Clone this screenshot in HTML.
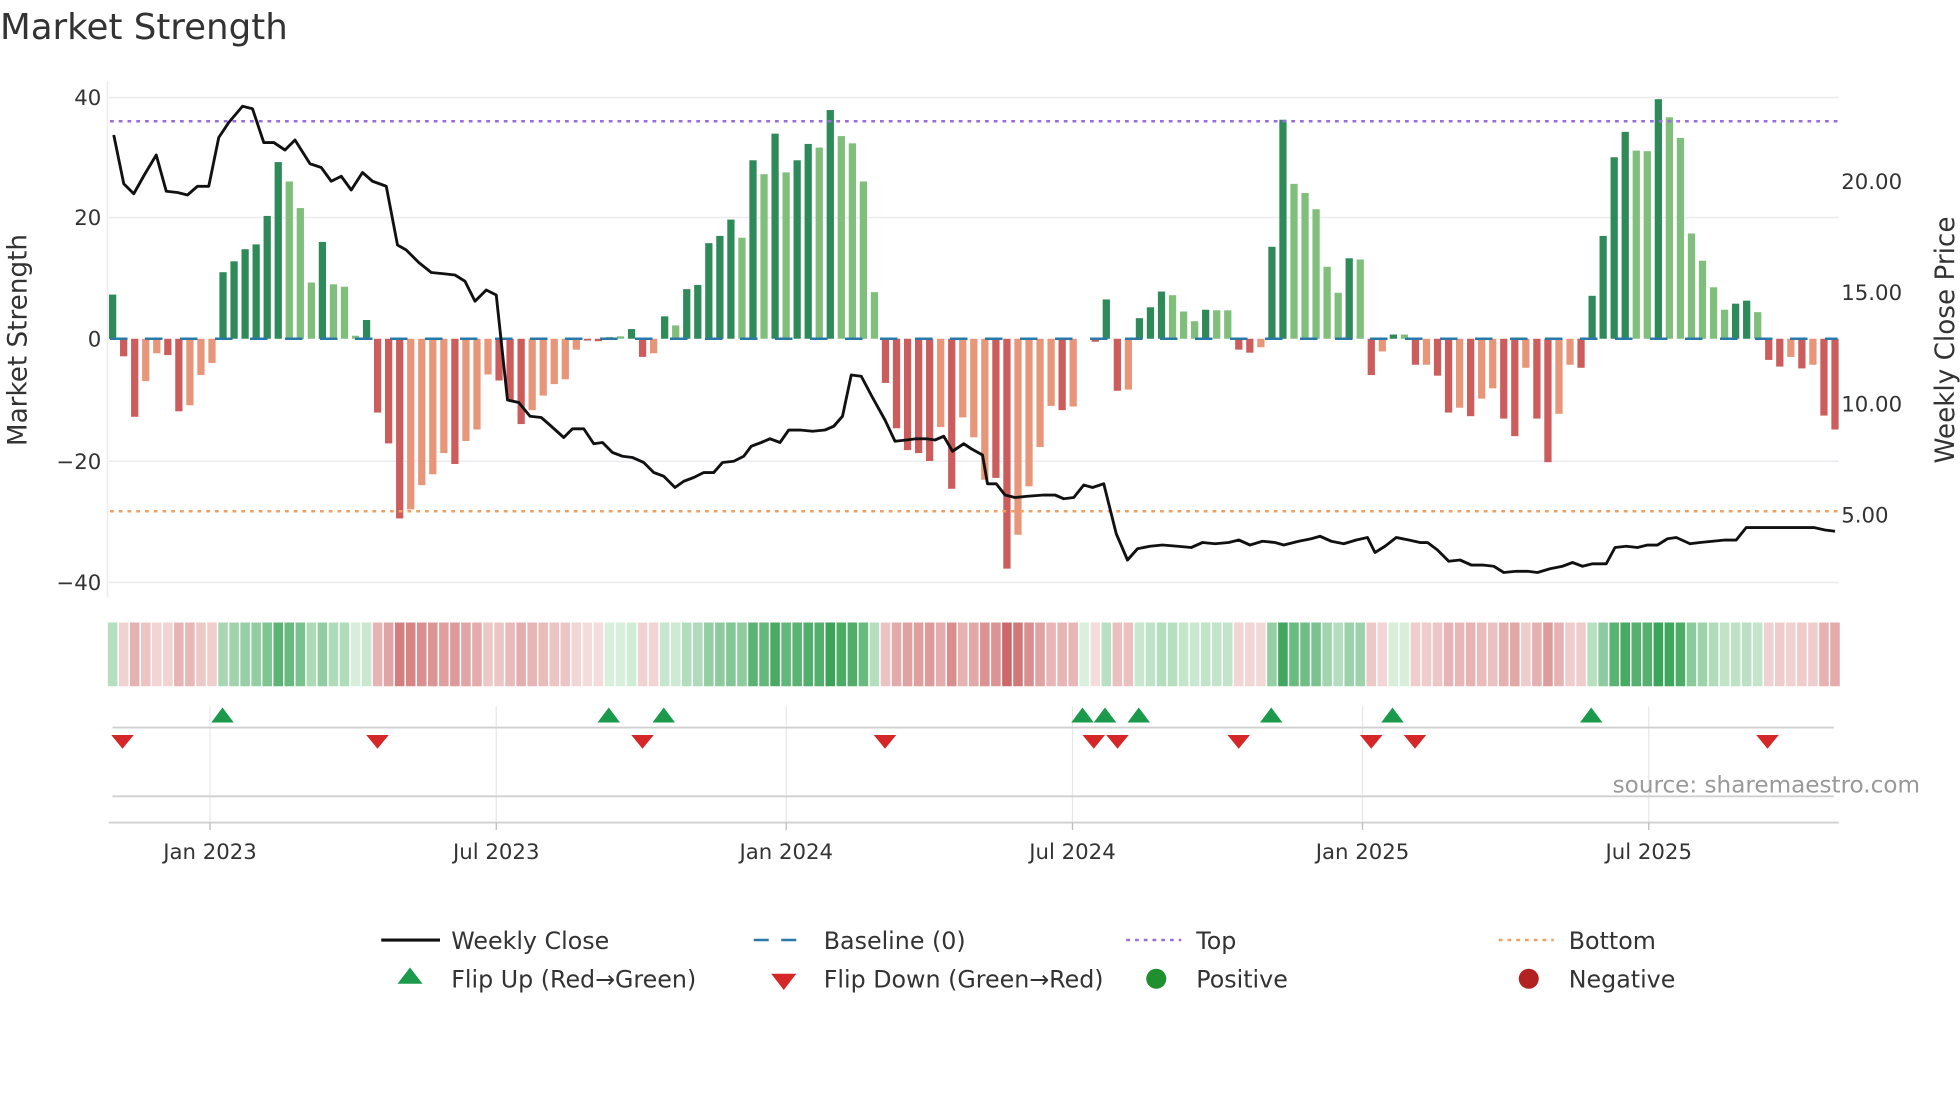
<!DOCTYPE html>
<html><head><meta charset="utf-8">
<style>
html,body{margin:0;padding:0;background:#fff;}
svg{display:block;}
text{font-family:"DejaVu Sans","Liberation Sans",sans-serif;fill:#333;}
</style></head>
<body>
<svg id="s" width="1960" height="1102" viewBox="0 0 1568 881.6" xmlns="http://www.w3.org/2000/svg">
<rect width="1568" height="881.6" fill="#fff"/>
<text x="0" y="31" font-size="28.5">Market Strength</text>
<g stroke="#ececf0" stroke-width="1.2">
<line x1="87" y1="78" x2="1471" y2="78"/>
<line x1="87" y1="174" x2="1471" y2="174"/>
<line x1="87" y1="369" x2="1471" y2="369"/>
<line x1="87" y1="466" x2="1471" y2="466"/>
</g>
<line x1="86" y1="65" x2="86" y2="478" stroke="#ececf0" stroke-width="1.2"/>
<g font-size="17" text-anchor="end">
<text x="81" y="84">40</text><text x="81" y="180">20</text><text x="81" y="277">0</text>
<text x="81" y="375">−20</text><text x="81" y="472">−40</text>
</g>
<g font-size="17">
<text x="1473" y="151">20.00</text><text x="1473" y="240">15.00</text>
<text x="1473" y="329">10.00</text><text x="1473" y="418">5.00</text>
</g>
<text transform="translate(21,272) rotate(-90)" font-size="21" text-anchor="middle">Market Strength</text>
<text transform="translate(1563,272) rotate(-90)" font-size="21" text-anchor="middle">Weekly Close Price</text>
<g id="bars"></g>
<line x1="88" y1="271" x2="1470" y2="271" stroke="#2a78a8" stroke-width="2" stroke-dasharray="14,14"/>
<line x1="88" y1="97" x2="1470" y2="97" stroke="#9b6ce0" stroke-width="2" stroke-dasharray="3,4"/>
<line x1="88" y1="409" x2="1470" y2="409" stroke="#f0a060" stroke-width="2" stroke-dasharray="3,4"/>
<polyline id="price" fill="none" stroke="#111" stroke-width="2.3" stroke-linejoin="round"/>
<g id="strip"></g>
<g stroke="#e8e8ec" stroke-width="1">
<line x1="168" y1="565" x2="168" y2="658"/><line x1="397" y1="565" x2="397" y2="658"/>
<line x1="629" y1="565" x2="629" y2="658"/><line x1="858" y1="565" x2="858" y2="658"/>
<line x1="1090" y1="565" x2="1090" y2="658"/><line x1="1319" y1="565" x2="1319" y2="658"/>
</g>
<line x1="90" y1="582" x2="1467" y2="582" stroke="#d0d0d0" stroke-width="1.5"/>
<line x1="90" y1="637" x2="1467" y2="637" stroke="#d0d0d0" stroke-width="1.5"/>
<line x1="87" y1="658" x2="1471" y2="658" stroke="#d0d0d0" stroke-width="1.5"/>
<g stroke="#bbb" stroke-width="1">
<line x1="168" y1="658" x2="168" y2="664"/><line x1="397" y1="658" x2="397" y2="664"/>
<line x1="629" y1="658" x2="629" y2="664"/><line x1="858" y1="658" x2="858" y2="664"/>
<line x1="1090" y1="658" x2="1090" y2="664"/><line x1="1319" y1="658" x2="1319" y2="664"/>
</g>
<g id="flips"></g>
<text x="1536" y="634" font-size="18.5" text-anchor="end" style="fill:#999">source: sharemaestro.com</text>
<g font-size="17" text-anchor="middle">
<text x="168" y="687">Jan 2023</text><text x="397" y="687">Jul 2023</text>
<text x="629" y="687">Jan 2024</text><text x="858" y="687">Jul 2024</text>
<text x="1090" y="687">Jan 2025</text><text x="1319" y="687">Jul 2025</text>
</g>
<g font-size="19">
<line x1="305" y1="752" x2="352" y2="752" stroke="#111" stroke-width="2.5"/>
<text x="361" y="759">Weekly Close</text>
<line x1="603" y1="752" x2="647" y2="752" stroke="#2a78a8" stroke-width="2" stroke-dasharray="12,10"/>
<text x="659" y="759">Baseline (0)</text>
<line x1="901" y1="752" x2="945" y2="752" stroke="#9b6ce0" stroke-width="2" stroke-dasharray="3,4"/>
<text x="957" y="759">Top</text>
<line x1="1199" y1="752" x2="1243" y2="752" stroke="#f0a060" stroke-width="2" stroke-dasharray="3,4"/>
<text x="1255" y="759">Bottom</text>
<polygon points="328,774 338,787 318,787" fill="#1a9a4a"/>
<text x="361" y="790">Flip Up (Red→Green)</text>
<polygon points="617,779 637,779 627,792" fill="#d62728"/>
<text x="659" y="790">Flip Down (Green→Red)</text>
<circle cx="925" cy="783" r="8" fill="#1f8f2f"/>
<text x="957" y="790">Positive</text>
<circle cx="1223" cy="783" r="8" fill="#b22222"/>
<text x="1255" y="790">Negative</text>
</g>
</svg>
<script>
var NS="http://www.w3.org/2000/svg";
function el(t,a,p){var e=document.createElementNS(NS,t);for(var k in a)e.setAttribute(k,a[k]);p.appendChild(e);return e;}
var d="7.3g,-2.9r,-12.9r,-7o,-2.4o,-2.7r,-12r,-11o,-6o,-4o,11g,12.8g,14.8g,15.6g,20.3g,29.2g,26l,21.6l,9.3l,16g,9l,8.6l,0.5l,3.1g,-12.2r,-17.3r,-29.7r,-28.2o,-24.2o,-22.4o,-18.9o,-20.7r,-16.9o,-15o,-5.9o,-6.9r,-10.2r,-14.1r,-11.8o,-9.4o,-7.5o,-6.7o,-1.8o,-0.3r,-0.4r,0.3l,0.4l,1.6g,-3r,-2.4o,3.7g,2.2l,8.2g,8.9g,15.8g,17g,19.7g,16.7l,29.5g,27.2l,33.9g,27.5l,29.5g,32.2g,31.6l,37.8g,33.5l,32.3l,26l,7.7l,-7.3r,-14.8r,-18.4r,-18.9r,-20.2r,-14.6o,-24.8r,-13o,-16.3o,-23.3o,-23r,-38r,-32.4o,-24.4o,-17.9o,-11.1o,-11.8r,-11.2o,0o,-0.5r,6.5g,-8.6r,-8.4o,3.4g,5.2g,7.8g,7.2l,4.5l,2.9l,4.8g,4.7l,4.7l,-1.8r,-2.3r,-1.4o,15.2g,36.2g,25.6l,24.1l,21.4l,11.9l,7.6l,13.3g,13.1l,-6r,-2.1o,0.7g,0.7l,-4.3r,-4.3o,-6.1r,-12.2r,-11.4o,-12.8r,-9.9o,-8.2o,-13.2r,-16.1r,-4.8o,-13.2r,-20.4r,-12.4o,-4.3o,-4.8r,7.1g,17g,30g,34.2g,31.1l,31l,39.6g,36.6l,33.2l,17.4l,12.9l,8.5l,4.8l,5.8g,6.3g,4.4l,-3.5r,-4.6r,-3o,-4.9r,-4.3o,-12.7r,-15r".split(",");
var col={g:"#2e8a58",l:"#7fbf7b",r:"#cd5c5c",o:"#e8967a"};
var bars=document.getElementById("bars"),strip=document.getElementById("strip");
var n=d.length,step=(1468-90.1)/(n-1);
function mix(a,b,t){return "rgb("+a.map(function(v,i){return Math.round(v+(b[i]-v)*t)}).join(",")+")";}
for(var i=0;i<n;i++){
 var v=parseFloat(d[i]),c=d[i].slice(-1),x=90.1+i*step;
 var y0=271,y1=271-v*4.84;
 if(Math.abs(v)>0.05) el("rect",{x:x-2.9,y:Math.min(y0,y1),width:5.8,height:Math.abs(y1-y0),fill:col[c]},bars);
 var t=Math.min(1,Math.abs(v)/38);
 var f=v>=0?mix([218,240,222],[58,164,88],Math.pow(t,0.9)):mix([245,222,222],[204,104,104],Math.pow(t,0.9));
 el("rect",{x:x-step/2+0.6,y:498,width:step-1.2,height:51,fill:f},strip);
}
var p="91,108 99,147 107,155 116,139 125,124 133,153 142,154 150,156 158,149 167,149 175,110 183,98 194,85 202,87 211,114 219,114 228,120 236,112 248,131 257,134 265,145 273,141 281,152 290,138 298,145 309,149 318,196 325,200 335,210 345,218 355,219 364,220 372,225 380,241 389,232 397,236 406,320 415,322 424,333 433,334 441,341 451,350 458,343 467,343 475,355 482,354 490,362 498,365 506,366 515,370 523,378 531,381 540,390 547,385 555,382 563,378 571,378 578,370 587,369 595,365 601,357 609,354 616,351 624,354 631,344 640,344 650,345 660,344 667,341 674,333 681,300 689,301 698,318 708,336 716,353 725,352 733,351 741,351 748,352 755,349 762,361 771,355 777,359 786,364 790,387 797,387 804,396 812,398 822,397 835,396 844,396 851,399 859,398 867,388 874,390 883,387 893,427 902,448 910,439 920,437 930,436 942,437 953,438 962,434 972,435 983,434 991,432 1000,436 1010,433 1020,434 1027,436 1039,433 1049,431 1056,429 1065,433 1075,435 1085,432 1094,430 1100,442 1108,437 1117,430 1127,432 1136,434 1142,434 1150,440 1159,449 1168,448 1177,452 1186,452 1195,453 1203,458 1213,457 1222,457 1230,458 1240,455 1250,453 1258,450 1266,453 1274,451 1285,451 1292,438 1301,437 1310,438 1318,436 1326,436 1334,431 1341,430 1352,435 1360,434 1370,433 1380,432 1389,432 1397,422 1408,422 1420,422 1432,422 1451,422 1460,424 1468,425";
document.getElementById("price").setAttribute("points",p);
var fl=document.getElementById("flips");
[178,487,531,866,884,911,1017,1114,1273].forEach(function(x){el("polygon",{points:(x)+",566 "+(x+9)+",578 "+(x-9)+",578",fill:"#1a9a4a"},fl);});
[98,302,514,708,875,894,991,1097,1132,1414].forEach(function(x){el("polygon",{points:(x-9)+",588 "+(x+9)+",588 "+x+",599",fill:"#d62728"},fl);});
</script>
</body></html>
